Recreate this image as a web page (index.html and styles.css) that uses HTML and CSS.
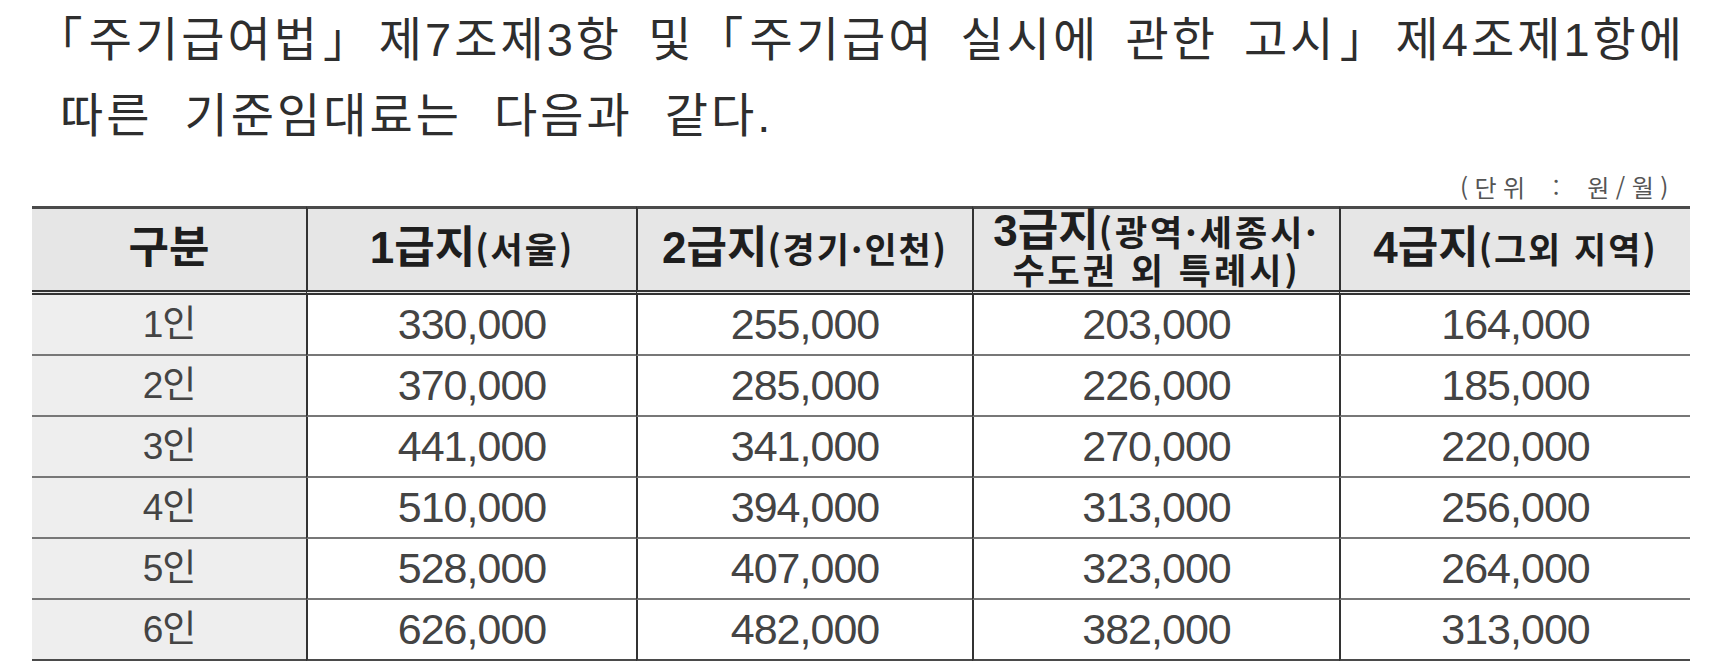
FILE: index.html
```html
<!DOCTYPE html>
<html lang="ko">
<head>
<meta charset="utf-8">
<title>기준임대료</title>
<link rel="stylesheet" href="styles.css">
</head>
<body>
<div class="page">
  <p class="intro">
    <span class="l1"><span class="bo">「</span>주기급여법<span class="bc">」</span> 제7조제3항 및 <span class="bo">「</span>주기급여 실시에 관한 고시<span class="bc">」</span> 제4조제1항에</span>
    <span class="l2">따른 기준임대료는 다음과 같다.</span>
  </p>
  <div class="unit">(단위 : 원/월)</div>
  <table class="rent">
    <colgroup>
      <col class="c1"><col class="c2"><col class="c3"><col class="c4"><col class="c5">
    </colgroup>
    <thead>
      <tr>
        <th><span class="big">구분</span></th>
        <th><span class="big">1급지</span><span class="sub">(서울)</span></th>
        <th><span class="big">2급지</span><span class="sub">(경기·인천)</span></th>
        <th class="two"><span class="ln"><span class="big">3급지</span><span class="sub">(광역·세종시·</span></span><span class="ln"><span class="sub">수도권 외 특례시)</span></span></th>
        <th><span class="big">4급지</span><span class="sub">(그외 지역)</span></th>
      </tr>
    </thead>
    <tbody>
      <tr><td class="label">1인</td><td>330,000</td><td>255,000</td><td>203,000</td><td>164,000</td></tr>
      <tr><td class="label">2인</td><td>370,000</td><td>285,000</td><td>226,000</td><td>185,000</td></tr>
      <tr><td class="label">3인</td><td>441,000</td><td>341,000</td><td>270,000</td><td>220,000</td></tr>
      <tr><td class="label">4인</td><td>510,000</td><td>394,000</td><td>313,000</td><td>256,000</td></tr>
      <tr><td class="label">5인</td><td>528,000</td><td>407,000</td><td>323,000</td><td>264,000</td></tr>
      <tr><td class="label">6인</td><td>626,000</td><td>482,000</td><td>382,000</td><td>313,000</td></tr>
    </tbody>
  </table>
</div>
</body>
</html>
```
FILE: styles.css
```css
html, body {
  margin: 0;
  padding: 0;
  background: #ffffff;
}

.page {
  width: 1725px;
  height: 661px;
  overflow: hidden;
}

.intro {
  margin: 2px 0 0 60px;
  width: 1625px;
  font-family: "Liberation Sans", "Noto Sans CJK KR", sans-serif;
  font-size: 47px;
  line-height: 76px;
  letter-spacing: 3px;
  color: #2e2e2e;
}

.bo,
.bc {
  font-family: "Noto Sans CJK KR", sans-serif;
  line-height: 0;
}

.bo {
  margin-left: -0.52em;
}

.bc {
  margin-right: -0.5em;
}

.l1 {
  display: block;
  white-space: nowrap;
  word-spacing: 7px;
  text-align: justify;
  text-align-last: justify;
}

.l2 {
  display: block;
  word-spacing: 16px;
}

.unit {
  margin-top: 18px;
  width: 1675px;
  padding-right: 15px;
  text-align: right;
  font-family: "Noto Sans CJK KR", sans-serif;
  font-size: 24px;
  line-height: 30px;
  letter-spacing: 6.5px;
  word-spacing: 8px;
  color: #555555;
}

.rent {
  margin: 4px 0 0 32px;
  width: 1658px;
  table-layout: fixed;
  border-collapse: separate;
  border-spacing: 0;
  font-family: "Liberation Sans", "Noto Sans CJK KR", sans-serif;
}

.c1 { width: 274px; }
.c2 { width: 330px; }
.c3 { width: 336px; }
.c4 { width: 367px; }
.c5 { width: 351px; }

.rent th,
.rent td {
  box-sizing: border-box;
  padding: 0;
  text-align: center;
  vertical-align: middle;
}

.rent th {
  height: 89px;
  background: #e6e6e6;
  border-top: 3px solid #4a4a4a;
  border-bottom: 5px double #333333;
  color: #1e1e1e;
  font-weight: 700;
  font-size: 35px;
  line-height: 40px;
  white-space: nowrap;
}

.rent th + th,
.rent td + td {
  border-left: 2px solid #333333;
}

.big {
  font-size: 44px;
}

.sub {
  font-family: "Noto Sans CJK KR", sans-serif;
  font-size: 35px;
  letter-spacing: 2px;
}

.two .sub {
  letter-spacing: 3px;
}

.ln {
  display: block;
  line-height: 35px;
}

.rent th.two {
  padding-top: 2px;
}

.rent td {
  height: 61px;
  border-bottom: 2px solid #777777;
  font-size: 43px;
  line-height: 59px;
  letter-spacing: -1px;
  color: #444444;
  background: #ffffff;
}

.rent td.label {
  background: #eeeeee;
  font-size: 37px;
}

.rent tbody tr:last-child td {
  border-bottom: 3px solid #4a4a4a;
}
```
